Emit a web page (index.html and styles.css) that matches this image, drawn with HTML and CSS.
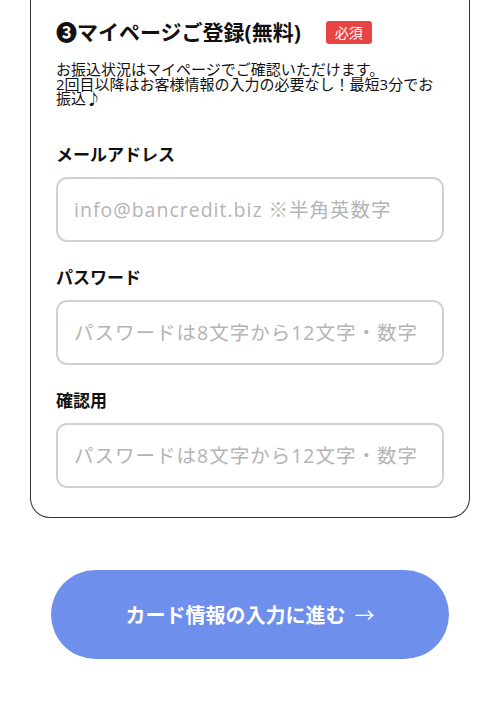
FILE: index.html
```html
<!DOCTYPE html>
<html lang="ja">
<head>
  <meta charset="UTF-8">
  <title>マイページご登録</title>
  <link rel="stylesheet" href="styles.css">
</head>
<body>
  <main>
    <section class="form-card">
      <h2 class="step-title">❸マイページご登録(無料)<span class="required">必須</span></h2>
      <p class="step-note">お振込状況はマイページでご確認いただけます。<br>2回目以降はお客様情報の入力の必要なし！最短3分でお振込♪</p>

      <div class="field">
        <label for="email">メールアドレス</label>
        <input type="email" id="email" placeholder="info@bancredit.biz ※半角英数字">
      </div>

      <div class="field">
        <label for="password">パスワード</label>
        <input type="password" id="password" placeholder="パスワードは8文字から12文字・数字">
      </div>

      <div class="field">
        <label for="confirm">確認用</label>
        <input type="password" id="confirm" placeholder="パスワードは8文字から12文字・数字">
      </div>
    </section>

    <button class="next-btn">カード情報の入力に進む <span class="arrow">→</span></button>
  </main>
</body>
</html>
```

FILE: styles.css
```css
* {
  margin: 0;
  padding: 0;
  box-sizing: border-box;
}

body {
  font-family: 'Open Sans', 'Noto Sans CJK JP', sans-serif;
  background: #fff;
  color: #111;
}

main {
  display: flex;
  flex-direction: column;
  align-items: center;
}

.form-card {
  width: 440px;
  border: 1.5px solid #333;
  border-top: none;
  border-radius: 0 0 20px 20px;
  padding: 17px 25px 29px 25px;
}

.step-title {
  font-size: 21px;
  line-height: 30px;
  font-weight: bold;
  display: flex;
  align-items: center;
}

.required {
  display: inline-block;
  background: #e94444;
  color: #fff;
  font-size: 14px;
  font-weight: normal;
  line-height: 23px;
  padding: 0 9px;
  border-radius: 3px;
  margin-left: 25px;
}

.step-note {
  margin-top: 15px;
  font-size: 15px;
  line-height: 14.5px;
}

.field {
  display: flex;
  flex-direction: column;
  margin-top: 24px;
}

.field:first-of-type {
  margin-top: 37px;
}

.field label {
  font-size: 17px;
  font-weight: bold;
  line-height: 24px;
  margin-bottom: 10px;
}

.field input {
  height: 65px;
  border: 2px solid #d2d2d2;
  border-radius: 11px;
  padding: 0 16px;
  font-family: inherit;
  font-size: 19.5px;
  letter-spacing: 1px;
  color: #333;
  outline: none;
}

.field input::placeholder {
  color: #b4b4b4;
}

.next-btn {
  margin-top: 52px;
  width: 398px;
  height: 89px;
  border: none;
  border-radius: 45px;
  background: #6e8feb;
  color: #fff;
  font-family: inherit;
  font-size: 20px;
  font-weight: bold;
  cursor: pointer;
}

.next-btn .arrow {
  font-weight: normal;
  margin-left: 4px;
}
```
